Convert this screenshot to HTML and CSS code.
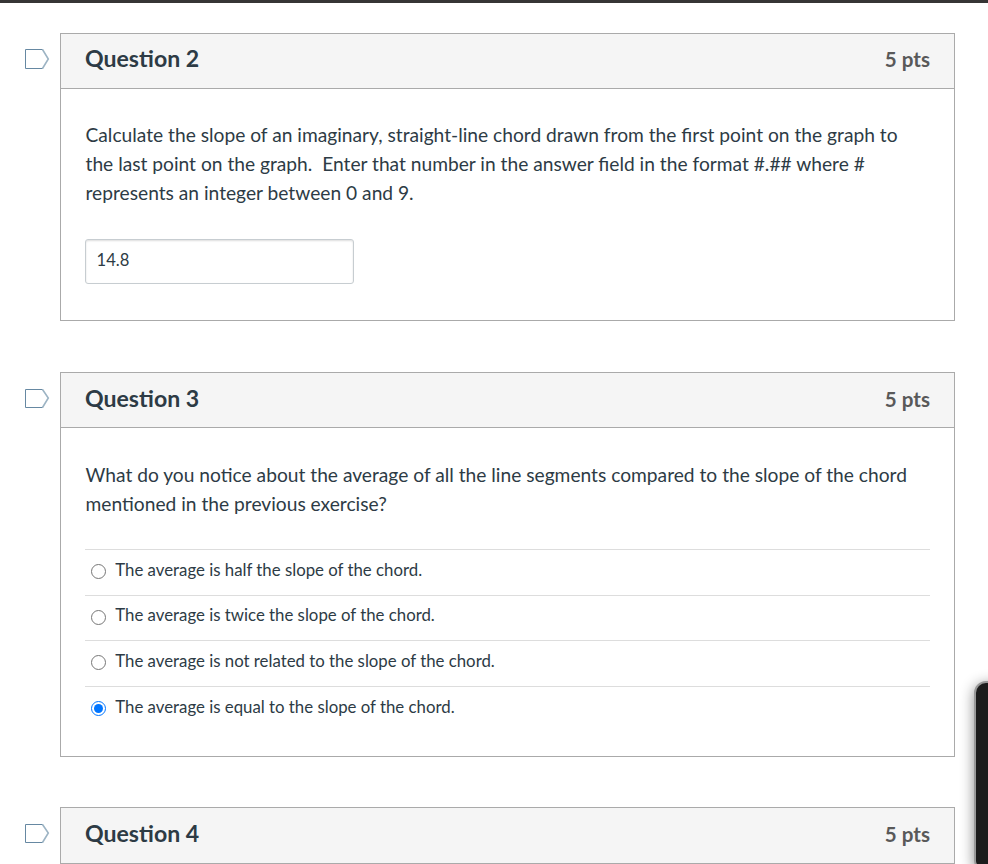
FILE: index.html
```html
<!DOCTYPE html>
<html lang="en">
<head>
<meta charset="utf-8">
<title>Quiz</title>
<link rel="stylesheet" href="styles.css">
</head>
<body>
<main class="quiz">
  <section class="row q2">
    <svg class="flag" viewBox="0 0 26 22"><path class="slant" d="M18.5 1.5L24.3 11L18.5 20.5"/><path class="edge" d="M18.5 1.5H1.5V20.5H18.5"/></svg>
    <article class="question">
      <header class="head"><h2>Question 2</h2><span class="points">5 pts</span></header>
      <div class="body">
        <p class="prompt">Calculate the slope of an imaginary, straight-line chord drawn from the first point on the graph to<br>the last point on the graph.&nbsp; Enter that number in the answer field in the format #.## where #<br>represents an integer between 0 and 9.</p>
        <input class="answer-field" type="text" value="14.8">
      </div>
    </article>
  </section>
  <section class="row q3">
    <svg class="flag" viewBox="0 0 26 22"><path class="slant" d="M18.5 2.5L24.3 11L18.5 20.5"/><path class="edge" d="M18.5 2.5H1.5V20.5H18.5"/></svg>
    <article class="question">
      <header class="head"><h2>Question 3</h2><span class="points">5 pts</span></header>
      <div class="body">
        <p class="prompt">What do you notice about the average of all the line segments compared to the slope of the chord<br>mentioned in the previous exercise?</p>
        <div class="answers">
          <label class="answer"><input type="radio" name="q3"><span>The average is half the slope of the chord.</span></label>
          <label class="answer short"><input type="radio" name="q3"><span>The average is twice the slope of the chord.</span></label>
          <label class="answer"><input type="radio" name="q3"><span>The average is not related to the slope of the chord.</span></label>
          <label class="answer"><input type="radio" name="q3" checked><span>The average is equal to the slope of the chord.</span></label>
        </div>
      </div>
    </article>
  </section>
  <section class="row q4">
    <svg class="flag" viewBox="0 0 26 22"><path class="slant" d="M18.5 2.5L24.3 11L18.5 20.5"/><path class="edge" d="M18.5 2.5H1.5V20.5H18.5"/></svg>
    <article class="question">
      <header class="head"><h2>Question 4</h2><span class="points">5 pts</span></header>
    </article>
  </section>
</main>
<aside class="side-panel"></aside>
</body>
</html>
```
FILE: styles.css
```css
* { box-sizing: border-box; }
body { margin: 0; height: 864px; overflow: hidden; background: #fff; color: #2d3b45; font-family: Lato, "Liberation Sans", sans-serif; border-top: 3px solid #363535; }
.quiz { padding: 30px 33px 0 24px; }
.row { display: flex; align-items: flex-start; }
.q2 { height: 339px; }
.q3 { height: 435px; }
.flag { width: 26px; height: 22px; margin: 15px 10px 0 0; flex: none; fill: none; }
.edge { stroke: #6688a2; stroke-width: 1; }
.slant { stroke: #9db4c4; stroke-width: 1.6; }
.question { flex: 1; border: 1px solid #aaa; background: #fff; }
.q2 .question { height: 288px; }
.q3 .question { height: 385px; }
.head { height: 55px; padding: 9px 24px 0; display: flex; align-items: flex-start; justify-content: space-between; background: #f5f5f5; border-bottom: 1px solid #aaa; }
.q3 .head, .q4 .head { padding-top: 10px; }
.q4 .head { height: 56px; }
h2 { margin: 0; font-size: 23.1px; line-height: 30px; font-weight: 700; }
.points { font-size: 20.6px; font-weight: 700; color: #595959; line-height: 30px; padding-top: 1px; }
.body { padding: 31px 24px 0; }
.q3 .body { padding-top: 32px; }
.prompt { margin: 0; padding-left: 0.5px; font-size: 19.21px; line-height: 29px; white-space: nowrap; }
.answer-field { display: block; width: 269px; height: 45px; margin-top: 32px; padding: 0 10.6px 4px; border: 1px solid #c7cdd1; border-radius: 3px; box-shadow: inset 0 1px 2px #0002; font: 16.6px Lato, sans-serif; color: #2d3b45; }
.answers { margin-top: 31px; }
.answer { display: flex; align-items: flex-start; height: 46px; border-top: 1px solid #ddd; font-size: 16.81px; line-height: 24px; padding-top: 8px; }
.answer.short { height: 45px; }
.answer.short span { margin-top: -1px; }
.answer input { width: 15px; height: 15px; margin: 6px 9.6px 0 5.7px; }
.side-panel { position: absolute; left: 974px; top: 681px; width: 32px; height: 188px; background: #1c1c1c; border: 2px solid #999; border-radius: 12px 0 0 8px; box-shadow: 0 3px 14px #0007; }
```
